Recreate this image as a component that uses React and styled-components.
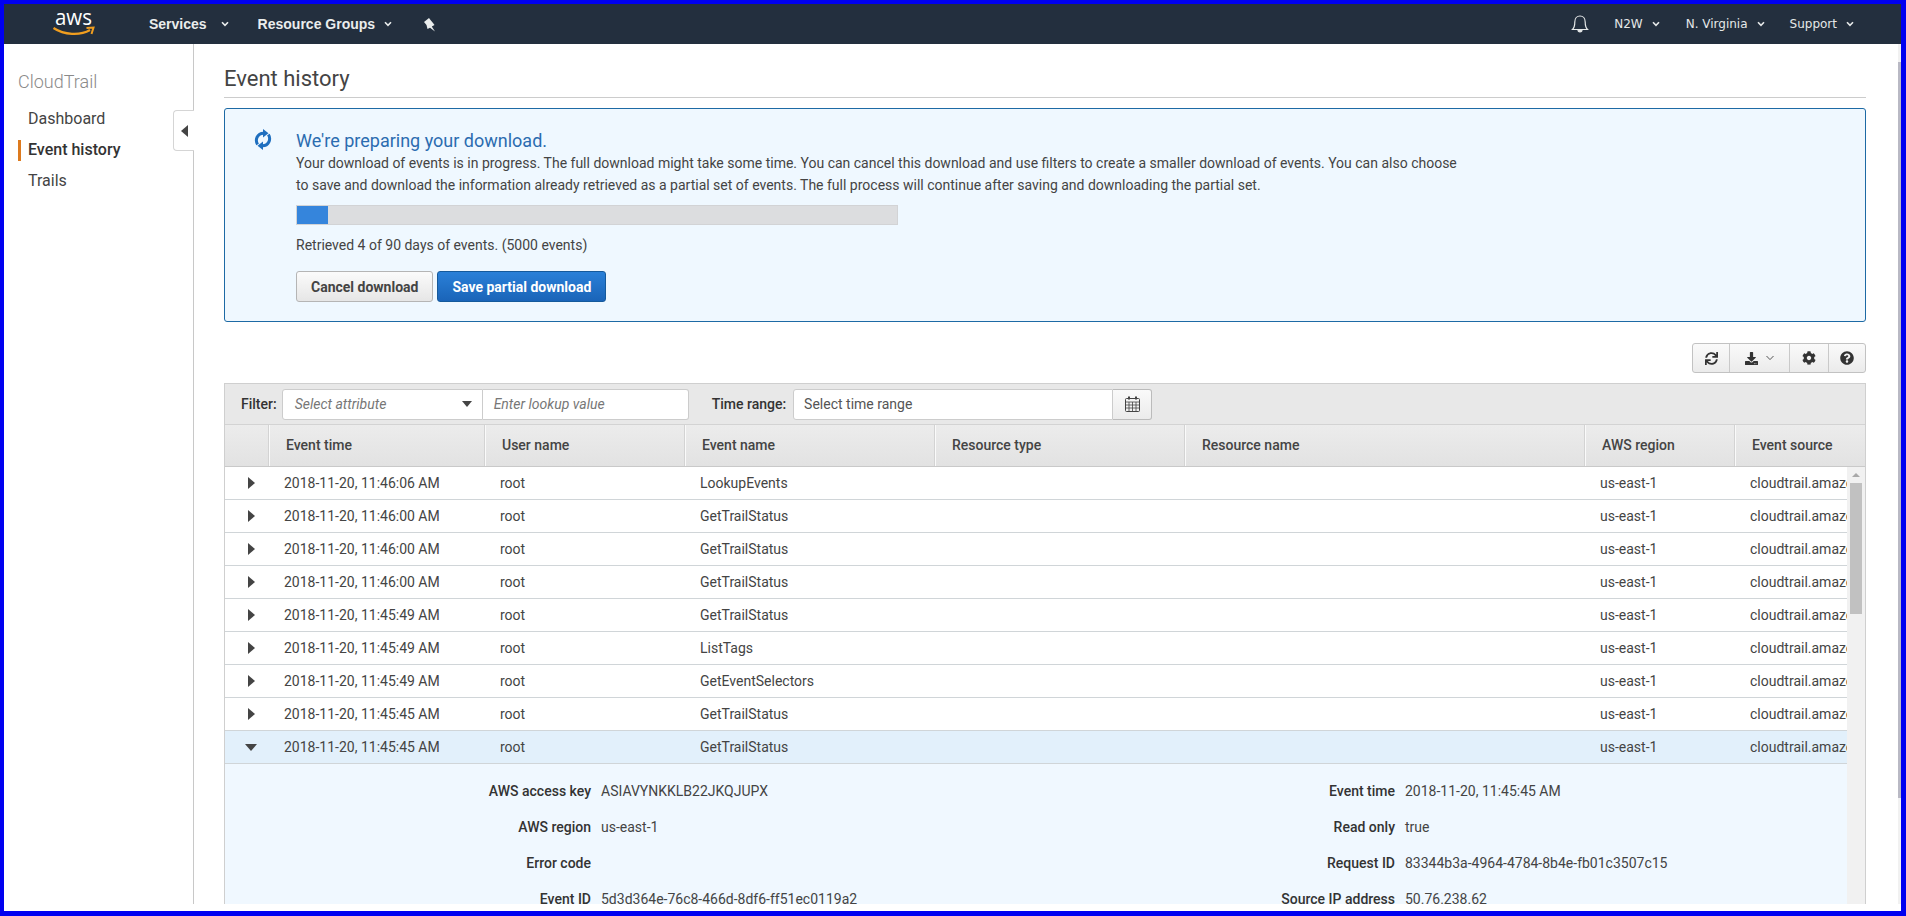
import React from 'react';
import styled, { createGlobalStyle } from 'styled-components';
import { FaSync, FaDownload, FaCog, FaQuestionCircle } from 'react-icons/fa';

const GlobalStyle = createGlobalStyle`
  html, body {
    margin: 0;
    height: 100%;
    overflow: hidden;
    background: #fff;
  }
  body {
    font-family: Roboto, "Liberation Sans", sans-serif;
    color: #444;
  }
`;

const Frame = styled.div`
  box-sizing: border-box;
  height: 916px;
  border: solid #0000f0;
  border-width: 4px 5px 5px 4px;
  background: #fff;
  padding-bottom: 7px;
  display: flex;
  flex-direction: column;
  overflow: hidden;
`;

const Navbar = styled.header`
  flex: none;
  height: 40px;
  background: #232f3e;
  display: flex;
  align-items: center;
  padding-left: 48px;
  padding-right: 47px;
`;

const LogoBox = styled.svg`
  width: 44px;
  height: 34px;
  margin-right: 53px;
  margin-top: -6px;
  overflow: visible;
`;

const MainItem = styled.span`
  display: flex;
  align-items: center;
  font-family: "Liberation Sans", Arial, sans-serif;
  font-weight: 700;
  font-size: 14px;
  color: #eaeded;
  margin-right: ${(p) => p.$mr}px;
  gap: ${(p) => p.$gap}px;
`;

const PinIcon = styled.svg`
  width: 13px;
  height: 15px;
`;

const NavRight = styled.div`
  margin-left: auto;
  display: flex;
  align-items: center;
`;

const BellIcon = styled.svg`
  width: 18px;
  height: 20px;
  margin-right: 25px;
`;

const RightItem = styled.span`
  display: flex;
  align-items: center;
  font-family: "DejaVu Sans", Verdana, sans-serif;
  font-size: 12px;
  color: #e5e8e8;
  gap: 9px;
  margin-left: ${(p) => p.$gap || 0}px;
`;

const Caret = styled.svg`
  width: 8px;
  height: 6px;
`;

const Body = styled.div`
  flex: 1;
  min-height: 0;
  display: flex;
`;

const Sidebar = styled.aside`
  flex: none;
  width: 189px;
  border-right: 1px solid #c8c8c8;
  position: relative;
  padding-top: 26px;
`;

const SideTitle = styled.div`
  font-size: 18px;
  font-weight: 300;
  color: #8a8a8a;
  line-height: 24px;
  margin-left: 14px;
  margin-bottom: 9px;
`;

const SideLink = styled.div`
  height: 31px;
  line-height: 31px;
  font-size: 16px;
  font-weight: ${(p) => (p.$active ? 500 : 400)};
  color: ${(p) => (p.$active ? '#333' : '#444')};
  margin-left: 14px;
  padding-left: 10px;
  position: relative;
  &::before {
    content: '';
    display: ${(p) => (p.$active ? 'block' : 'none')};
    position: absolute;
    left: 0;
    top: 6px;
    width: 3px;
    height: 21px;
    background: #dd7a1e;
  }
`;

const CollapseTab = styled.div`
  position: absolute;
  right: -1px;
  top: 66px;
  width: 21px;
  height: 41px;
  box-sizing: border-box;
  background: #fff;
  border: 1px solid #d5d5d5;
  border-right: none;
  border-radius: 4px 0 0 4px;
  display: flex;
  align-items: center;
  justify-content: center;
  &::after {
    content: '';
    border-style: solid;
    border-width: 6px 7px 6px 0;
    border-color: transparent #444 transparent transparent;
  }
`;

const Main = styled.main`
  flex: 1;
  min-width: 0;
  padding: 19px 32px 0 30px;
  display: flex;
  flex-direction: column;
  overflow: hidden;
`;

const PageTitle = styled.h1`
  margin: 0;
  font-size: 22px;
  font-weight: 400;
  line-height: 32px;
  color: #444;
  border-bottom: 1px solid #ccc;
  padding-bottom: 2px;
`;

const Banner = styled.section`
  flex: none;
  margin-top: 10px;
  box-sizing: border-box;
  height: 214px;
  background: #eff8ff;
  border: 1px solid #1d6aa5;
  border-radius: 3px;
  display: flex;
  padding: 20px 0 0 29px;
`;

const BannerIcon = styled.svg`
  flex: none;
  width: 18px;
  height: 21px;
  margin-right: 24px;
`;

const BannerBody = styled.div`
  width: 1175px;
`;

const BannerTitle = styled.div`
  font-size: 18px;
  line-height: 23px;
  color: #2b6cb0;
`;

const BannerText = styled.p`
  margin: 0;
  font-size: 14px;
  line-height: 22px;
  color: #444;
`;

const ProgressTrack = styled.div`
  width: 602px;
  height: 20px;
  margin-top: 9px;
  background: #dcdddf;
  border: 1px solid #d2d3d5;
  box-sizing: border-box;
`;

const ProgressFill = styled.div`
  height: 100%;
  background: #3585dc;
`;

const Retrieved = styled.div`
  margin-top: 10px;
  font-size: 14px;
  line-height: 20px;
`;

const ButtonRow = styled.div`
  display: flex;
  gap: 4px;
  margin-top: 16px;
`;

const Button = styled.button`
  height: 31px;
  box-sizing: border-box;
  padding: 0 14px;
  font-family: Roboto, sans-serif;
  font-size: 14px;
  font-weight: 700;
  border-radius: 3px;
  color: ${(p) => (p.$primary ? '#fff' : '#444')};
  border: 1px solid ${(p) => (p.$primary ? '#155a9c' : '#b5b5b5')};
  background: ${(p) =>
    p.$primary ? 'linear-gradient(#2a80d8, #1a64b8)' : 'linear-gradient(#fbfbfb, #e6e6e6)'};
`;

const ToolRow = styled.div`
  flex: none;
  display: flex;
  justify-content: flex-end;
  margin-top: 21px;
`;

const ToolGroup = styled.div`
  display: flex;
  height: 30px;
  box-sizing: border-box;
  border: 1px solid #c2c2c2;
  border-radius: 3px;
  background: linear-gradient(#fafafa, #ebebeb);
`;

const ToolButton = styled.div`
  box-sizing: border-box;
  width: ${(p) => p.$w}px;
  display: flex;
  align-items: center;
  justify-content: center;
  gap: 8px;
  color: #333;
  font-size: 14px;
  & + & {
    border-left: 1px solid #c9c9c9;
  }
`;

const TablePanel = styled.section`
  flex: 1;
  min-height: 0;
  margin-top: 10px;
  border: 1px solid #cfcfcf;
  border-bottom: none;
  display: flex;
  flex-direction: column;
`;

const FilterBar = styled.div`
  flex: none;
  height: 40px;
  background: #e8e8e8;
  display: flex;
  align-items: center;
  padding-left: 16px;
  font-size: 14px;
`;

const FilterLabel = styled.span`
  font-weight: 500;
  color: #333;
  margin-right: ${(p) => p.$mr || 5}px;
  margin-left: ${(p) => p.$ml || 0}px;
`;

const SelectBox = styled.div`
  box-sizing: border-box;
  width: 201px;
  height: 31px;
  background: #fff;
  border: 1px solid #ccc;
  border-radius: 3px 0 0 3px;
  display: flex;
  align-items: center;
  justify-content: space-between;
  padding: 0 10px 0 12px;
  font-style: italic;
  color: #777;
  &::after {
    content: '';
    border-style: solid;
    border-width: 6px 5px 0 5px;
    border-color: #444 transparent transparent transparent;
  }
`;

const ValueBox = styled.div`
  box-sizing: border-box;
  width: 206px;
  height: 31px;
  background: #fff;
  border: 1px solid #ccc;
  border-left: none;
  border-radius: 0 3px 3px 0;
  display: flex;
  align-items: center;
  padding-left: 11px;
  font-style: italic;
  color: #777;
`;

const TimeBox = styled.div`
  box-sizing: border-box;
  width: 320px;
  height: 31px;
  background: #fff;
  border: 1px solid #ccc;
  border-radius: 3px 0 0 3px;
  display: flex;
  align-items: center;
  padding-left: 10px;
  color: #555;
`;

const CalendarButton = styled.div`
  box-sizing: border-box;
  width: 39px;
  height: 31px;
  border: 1px solid #bbb;
  border-left: none;
  border-radius: 0 3px 3px 0;
  background: linear-gradient(#fafafa, #ebebeb);
  display: flex;
  align-items: center;
  justify-content: center;
  color: #444;
`;

const CalendarIcon = styled.svg`
  width: 15px;
  height: 16px;
`;

const columns = [44, 216, 200, 250, 250, 400, 150, 130];

const Grid = styled.div`
  display: grid;
  grid-template-columns: ${columns.map((w) => `${w}px`).join(' ')};
`;

const HeaderRow = styled(Grid)`
  flex: none;
  height: 43px;
  box-sizing: border-box;
  background: linear-gradient(#ececec, #e2e2e2);
  border-top: 1px solid #d3d3d3;
  border-bottom: 1px solid #c9c9c9;
`;

const HeaderCell = styled.div`
  display: flex;
  align-items: center;
  padding: 0 0 2px 16px;
  font-size: 14px;
  font-weight: 500;
  color: #444;
  border-left: ${(p) => (p.$first ? 'none' : '1px solid #fafafa')};
  box-shadow: ${(p) => (p.$first ? 'none' : '-1px 0 0 #d3d3d3')};
`;

const ScrollArea = styled.div`
  flex: 1;
  min-height: 0;
  display: flex;
  overflow: hidden;
`;

const Rows = styled.div`
  flex: 1;
  min-width: 0;
  overflow: hidden;
`;

const Row = styled(Grid)`
  height: 33px;
  box-sizing: border-box;
  background: ${(p) => (p.$open ? '#e2f0fb' : '#fff')};
  border-bottom: 1px solid #d0d5d8;
  font-size: 14px;
  color: #444;
`;

const Cell = styled.div`
  display: flex;
  align-items: center;
  padding-left: 15px;
  white-space: nowrap;
`;

const ArrowCell = styled.div`
  display: flex;
  align-items: center;
  justify-content: center;
  padding-left: 8px;
  &::after {
    content: '';
    border-style: solid;
    border-width: ${(p) => (p.$open ? '7px 6px 0 6px' : '6px 0 6px 7px')};
    border-color: ${(p) =>
      p.$open ? '#444 transparent transparent transparent' : 'transparent transparent transparent #444'};
  }
`;

const Details = styled.div`
  background: #f0f8ff;
  height: 200px;
  padding-top: 9px;
  display: grid;
  grid-template-columns: 366px 1fr 352px 1fr;
  grid-auto-rows: 36px;
  font-size: 14px;
`;

const DetailLabel = styled.div`
  display: flex;
  align-items: center;
  justify-content: flex-end;
  font-weight: 500;
  color: #333;
`;

const DetailValue = styled.div`
  display: flex;
  align-items: center;
  padding-left: 10px;
  color: #444;
`;

const TableScrollbar = styled.div`
  flex: none;
  width: 18px;
  background: #f1f1f1;
  display: flex;
  flex-direction: column;
  align-items: center;
  &::before {
    content: '';
    margin-top: 6px;
    border-style: solid;
    border-width: 0 4px 4px 4px;
    border-color: transparent transparent #a8a8a8 transparent;
  }
`;

const TableThumb = styled.div`
  width: 12px;
  height: 131px;
  margin-top: 6px;
  background: #c1c1c1;
`;

const PageScrollbar = styled.div`
  flex: none;
  width: 3px;
  background: #f1f1f1;
  padding-top: 18px;
`;

const PageThumb = styled.div`
  height: 736px;
  background: #b9b9c4;
`;

const rows = [
  ['2018-11-20, 11:46:06 AM', 'LookupEvents'],
  ['2018-11-20, 11:46:00 AM', 'GetTrailStatus'],
  ['2018-11-20, 11:46:00 AM', 'GetTrailStatus'],
  ['2018-11-20, 11:46:00 AM', 'GetTrailStatus'],
  ['2018-11-20, 11:45:49 AM', 'GetTrailStatus'],
  ['2018-11-20, 11:45:49 AM', 'ListTags'],
  ['2018-11-20, 11:45:49 AM', 'GetEventSelectors'],
  ['2018-11-20, 11:45:45 AM', 'GetTrailStatus'],
  ['2018-11-20, 11:45:45 AM', 'GetTrailStatus', true],
];

const details = [
  ['AWS access key', 'ASIAVYNKKLB22JKQJUPX', 'Event time', '2018-11-20, 11:45:45 AM'],
  ['AWS region', 'us-east-1', 'Read only', 'true'],
  ['Error code', '', 'Request ID', '83344b3a-4964-4784-8b4e-fb01c3507c15'],
  ['Event ID', '5d3d364e-76c8-466d-8df6-ff51ec0119a2', 'Source IP address', '50.76.238.62'],
];

const headers = ['', 'Event time', 'User name', 'Event name', 'Resource type', 'Resource name', 'AWS region', 'Event source'];

const Chevron = () => (
  <Caret viewBox="0 0 8 6">
    <path d="M1 1.2 L4 4.4 L7 1.2" fill="none" stroke="currentColor" strokeWidth="1.6" />
  </Caret>
);

const App = () => {
  return (
    <Frame>
      <GlobalStyle />
      <Navbar>
        <LogoBox viewBox="0 0 44 34">
          <text x="3" y="21" fontFamily="'Open Sans', sans-serif" fontSize="22" textLength="37" lengthAdjust="spacingAndGlyphs" fill="#fff">aws</text>
          <path d="M1.5 24 C12 31 28 32 38 26" fill="none" stroke="#f19e1f" strokeWidth="2.2" />
          <path d="M34.5 24 L41.5 23.5 L39.5 30" fill="none" stroke="#f19e1f" strokeWidth="2" />
        </LogoBox>
        <MainItem $mr={29} $gap={14}>Services <Chevron /></MainItem>
        <MainItem $mr={31} $gap={9}>Resource Groups <Chevron /></MainItem>
        <PinIcon viewBox="0 0 13 15">
          <path d="M1 5 L6 1 L7.5 3 L10 6 L11.5 8 L8.8 9.5 L12 14.5 L7 10.8 L4.5 12 L3.5 8 Z" fill="#eaeded" />
        </PinIcon>
        <NavRight>
          <BellIcon viewBox="0 0 18 20" fill="none" stroke="#e5e8e8" strokeWidth="1.2">
            <path d="M1.5 15.5 C3.5 13.5 3.8 11 3.8 8 C3.8 4.5 6 2 9 2 C12 2 14.2 4.5 14.2 8 C14.2 11 14.5 13.5 16.5 15.5 Z" />
            <path d="M7 16 C7 18.5 11 18.5 11 16" fill="#e5e8e8" />
          </BellIcon>
          <RightItem>N2W <Chevron /></RightItem>
          <RightItem $gap={26}>N. Virginia <Chevron /></RightItem>
          <RightItem $gap={25}>Support <Chevron /></RightItem>
        </NavRight>
      </Navbar>
      <Body>
        <Sidebar>
          <SideTitle>CloudTrail</SideTitle>
          <SideLink>Dashboard</SideLink>
          <SideLink $active>Event history</SideLink>
          <SideLink>Trails</SideLink>
          <CollapseTab />
        </Sidebar>
        <Main>
          <PageTitle>Event history</PageTitle>
          <Banner>
            <BannerIcon viewBox="0 0 18 21" fill="none" stroke="#1f6fbf" strokeWidth="3">
              <path d="M3.6 15.5 C0.6 10.5 3.5 4.4 9.5 4.2" />
              <path d="M14.4 5.5 C17.4 10.5 14.5 16.6 8.5 16.8" />
              <path d="M9 0 L14.5 4.3 L9 8.5 Z" fill="#1f6fbf" stroke="none" />
              <path d="M9 12.5 L3.5 16.7 L9 21 Z" fill="#1f6fbf" stroke="none" />
            </BannerIcon>
            <BannerBody>
              <BannerTitle>We're preparing your download.</BannerTitle>
              <BannerText>
                Your download of events is in progress. The full download might take some time. You can cancel this download and use filters to create a smaller download of events. You can also choose to save and download the information already retrieved as a partial set of events. The full process will continue after saving and downloading the partial set.
              </BannerText>
              <ProgressTrack>
                <ProgressFill style={{ width: `${(4 / 90) * 100 + 0.7}%` }} />
              </ProgressTrack>
              <Retrieved>Retrieved 4 of 90 days of events. (5000 events)</Retrieved>
              <ButtonRow>
                <Button>Cancel download</Button>
                <Button $primary>Save partial download</Button>
              </ButtonRow>
            </BannerBody>
          </Banner>
          <ToolRow>
            <ToolGroup>
              <ToolButton $w={36}><FaSync size={13} /></ToolButton>
              <ToolButton $w={60}>
                <FaDownload size={13} />
                <Caret viewBox="0 0 8 6">
                  <path d="M0.5 1 L4 4.6 L7.5 1" fill="none" stroke="#555" strokeWidth="1" />
                </Caret>
              </ToolButton>
              <ToolButton $w={39}><FaCog size={14} /></ToolButton>
              <ToolButton $w={37}><FaQuestionCircle size={14} /></ToolButton>
            </ToolGroup>
          </ToolRow>
          <TablePanel>
            <FilterBar>
              <FilterLabel>Filter:</FilterLabel>
              <SelectBox>Select attribute</SelectBox>
              <ValueBox>Enter lookup value</ValueBox>
              <FilterLabel $ml={23} $mr={7}>Time range:</FilterLabel>
              <TimeBox>Select time range</TimeBox>
              <CalendarButton>
                <CalendarIcon viewBox="0 0 15 16" fill="none" stroke="#444">
                  <rect x="0.5" y="2.5" width="14" height="13" rx="1" />
                  <path d="M0.5 6 H14.5 M0.5 9 H14.5 M0.5 12 H14.5 M4 6 V15 M7.5 6 V15 M11 6 V15" strokeWidth="0.8" />
                  <path d="M4 0.5 V3.5 M11 0.5 V3.5" strokeWidth="2" />
                </CalendarIcon>
              </CalendarButton>
            </FilterBar>
            <HeaderRow>
              {headers.map((h, i) => (
                <HeaderCell key={i} $first={i === 0}>{h}</HeaderCell>
              ))}
            </HeaderRow>
            <ScrollArea>
              <Rows>
                {rows.map((r, i) => (
                  <Row key={i} $open={r[2]}>
                    <ArrowCell $open={r[2]} />
                    <Cell>{r[0]}</Cell>
                    <Cell>root</Cell>
                    <Cell>{r[1]}</Cell>
                    <Cell />
                    <Cell />
                    <Cell>us-east-1</Cell>
                    <Cell>cloudtrail.amazonaws.com</Cell>
                  </Row>
                ))}
                <Details>
                  {details.map((d) => (
                    <React.Fragment key={d[0]}>
                      <DetailLabel>{d[0]}</DetailLabel>
                      <DetailValue>{d[1]}</DetailValue>
                      <DetailLabel>{d[2]}</DetailLabel>
                      <DetailValue>{d[3]}</DetailValue>
                    </React.Fragment>
                  ))}
                </Details>
              </Rows>
              <TableScrollbar><TableThumb /></TableScrollbar>
            </ScrollArea>
          </TablePanel>
        </Main>
        <PageScrollbar><PageThumb /></PageScrollbar>
      </Body>
    </Frame>
  );
};

export default App;
